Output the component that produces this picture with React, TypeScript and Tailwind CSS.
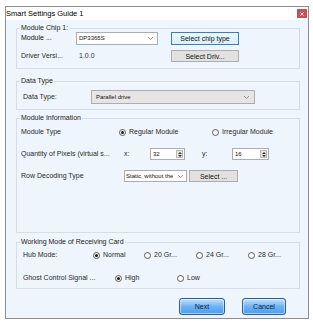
import React from 'react';

// Small building blocks for the wizard dialog
function Group({ title, className, children }: { title: string; className: string; children: React.ReactNode }) {
  return (
    <div className={`relative border border-[#d5dee8] ${className}`}>
      <span className="absolute -top-[6px] left-[3px] px-[1px] bg-[#eef5fc] leading-[10px] text-[#222]">{title}</span>
      {children}
    </div>
  );
}

function Radio({ checked, label, w }: { checked?: boolean; label: string; w: string }) {
  return (
    <div className={`flex items-center shrink-0 ${w}`}>
      <span className="w-[7px] h-[7px] rounded-full border border-[#5a5a5a] bg-white flex items-center justify-center shrink-0">
        {checked && <span className="w-[3px] h-[3px] rounded-full bg-[#1e1e1e]" />}
      </span>
      <span className="ml-[3px] whitespace-nowrap">{label}</span>
    </div>
  );
}

function Chevron() {
  return (
    <svg width="7" height="5" viewBox="0 0 7 5" className="shrink-0">
      <path d="M1 1 L3.5 3.5 L6 1" fill="none" stroke="#8a8a8a" strokeWidth="0.9" />
    </svg>
  );
}

function Spin({ value }: { value: string }) {
  return (
    <div className="h-[12px] border border-[#abadb3] bg-white flex">
      <span className="flex-1 min-w-0 pl-[2px] text-[6px] leading-[10px] text-[#111]">{value}</span>
      <div className="w-[7px] flex flex-col border border-[#b9b9b9] bg-[#e8e8e8] m-[1px]">
        <span className="flex-1 flex items-center justify-center">
          <svg width="4" height="2" viewBox="0 0 4 2"><path d="M0 2 L2 0 L4 2 Z" fill="#333" /></svg>
        </span>
        <span className="flex-1 flex items-center justify-center">
          <svg width="4" height="2" viewBox="0 0 4 2"><path d="M0 0 L2 2 L4 0 Z" fill="#333" /></svg>
        </span>
      </div>
    </div>
  );
}

export default function App() {
  return (
    <div className="w-[313px] h-[322px] bg-white pl-[5px] pt-[6px] font-['Liberation_Sans',Arial,sans-serif] text-[7px] text-[#2a2a2a]">
      {/* Dialog window */}
      <div className="w-[304px] h-[313px] border border-[#8d8d8d] flex flex-col">
        {/* Title bar */}
        <div className="h-[13px] bg-white flex items-start justify-between">
          <span className="text-[7.5px] leading-[13px] text-black">Smart Settings Guide 1</span>
          <div className="w-[10px] h-[9px] mt-[2px] mr-[1px] bg-[#c94f52] flex items-center justify-center">
            <svg width="4" height="4" viewBox="0 0 4 4"><path d="M0.5 0.5 L3.5 3.5 M3.5 0.5 L0.5 3.5" stroke="white" strokeWidth="0.9" /></svg>
          </div>
        </div>

        {/* Body */}
        <div className="flex-1 bg-[#eef5fc] flex flex-col">
          {/* Module Chip */}
          <Group title="Module Chip 1:" className="mt-[8px] ml-[10px] w-[284px] h-[41px]">
            <div className="flex items-center h-[13px] mt-[3px] pl-[4px]">
              <span className="w-[55px] shrink-0 text-[#111]">Module ...</span>
              <div className="w-[82px] h-[13px] border border-[#abadb3] bg-white flex items-center justify-between pl-[2px] pr-[3px]">
                <span className="text-[6px] text-[#111]">DP3365S</span>
                <Chevron />
              </div>
              <button className="ml-[13px] w-[68px] h-[13px] border border-[#3c7fb1] bg-linear-to-b from-[#eaf6fd] to-[#d9f0fc] text-[#111] leading-none">Select chip type</button>
            </div>
            <div className="flex items-center h-[12px] mt-[5px] pl-[4px]">
              <span className="w-[58px] shrink-0">Driver Versi...</span>
              <span className="w-[92px] shrink-0 text-[#333]">1.0.0</span>
              <button className="w-[68px] h-[12px] border border-[#adadad] bg-[#e1e1e1] text-[#111] leading-none">Select Driv...</button>
            </div>
          </Group>

          {/* Data Type */}
          <Group title="Data Type" className="mt-[12px] ml-[10px] w-[284px] h-[29px]">
            <div className="flex items-center h-[14px] mt-[8px] pl-[6px]">
              <span className="w-[68px] shrink-0">Data Type:</span>
              <div className="w-[164px] h-[14px] border border-[#adadad] bg-[#e5e5e5] flex items-center justify-between pl-[4px] pr-[4px]">
                <span className="text-[6px] text-[#111]">Parallel drive</span>
                <Chevron />
              </div>
            </div>
          </Group>

          {/* Module Information */}
          <Group title="Module Information" className="mt-[8px] ml-[10px] w-[284px] h-[115px]">
            <div className="flex items-center h-[12px] mt-[7px] pl-[4px]">
              <span className="w-[98px] shrink-0">Module Type</span>
              <Radio checked label="Regular Module" w="w-[93px]" />
              <Radio label="Irregular Module" w="w-[80px]" />
            </div>
            <div className="grid grid-cols-[103px_26px_35px_17px_30px_37px] items-center h-[12px] mt-[10px] ml-[4px] w-[248px]">
              <span className="whitespace-nowrap overflow-hidden">Quantity of Pixels (virtual s...</span>
              <span>x:</span>
              <Spin value="32" />
              <span />
              <span>y:</span>
              <Spin value="16" />
            </div>
            <div className="flex items-center h-[12px] mt-[10px] pl-[4px]">
              <span className="w-[103px] shrink-0">Row Decoding Type</span>
              <div className="w-[63px] h-[12px] border border-[#abadb3] bg-white flex items-center justify-between pl-[1px] pr-[2px] overflow-hidden">
                <span className="text-[6px] text-[#111] whitespace-nowrap overflow-hidden">Static, without the</span>
                <Chevron />
              </div>
              <button className="ml-[2px] w-[49px] h-[12px] border border-[#adadad] bg-[#e1e1e1] text-[#111] leading-none">Select ...</button>
            </div>
          </Group>

          {/* Working Mode */}
          <Group title="Working Mode of Receiving Card" className="mt-[9px] ml-[10px] w-[284px] h-[47px]">
            <div className="flex items-center h-[10px] mt-[7px] pl-[6px]">
              <span className="w-[70px] shrink-0">Hub Mode:</span>
              <Radio checked label="Normal" w="w-[51px]" />
              <Radio label="20 Gr..." w="w-[52px]" />
              <Radio label="24 Gr..." w="w-[52px]" />
              <Radio label="28 Gr..." w="w-[40px]" />
            </div>
            <div className="flex items-center h-[10px] mt-[13px] pl-[6px]">
              <span className="w-[92px] shrink-0 whitespace-nowrap">Ghost Control Signal ...</span>
              <Radio checked label="High" w="w-[62px]" />
              <Radio label="Low" w="w-[40px]" />
            </div>
          </Group>

          {/* Footer buttons */}
          <div className="flex justify-end gap-[17px] mt-[9px] mr-[22px]">
            <button className="w-[46px] h-[17px] rounded-[3px] border border-[#2d5f95] bg-linear-to-b from-[#c4e2fd] via-[#6db3f6] to-[#4c9cee] text-[#0f2342] leading-none shadow-[inset_0_0_0_1px_rgba(255,255,255,0.5)]">Next</button>
            <button className="w-[44px] h-[17px] rounded-[3px] border border-[#2d5f95] bg-linear-to-b from-[#c4e2fd] via-[#6db3f6] to-[#4c9cee] text-[#0f2342] leading-none shadow-[inset_0_0_0_1px_rgba(255,255,255,0.5)]">Cancel</button>
          </div>
        </div>
      </div>
    </div>
  );
}
